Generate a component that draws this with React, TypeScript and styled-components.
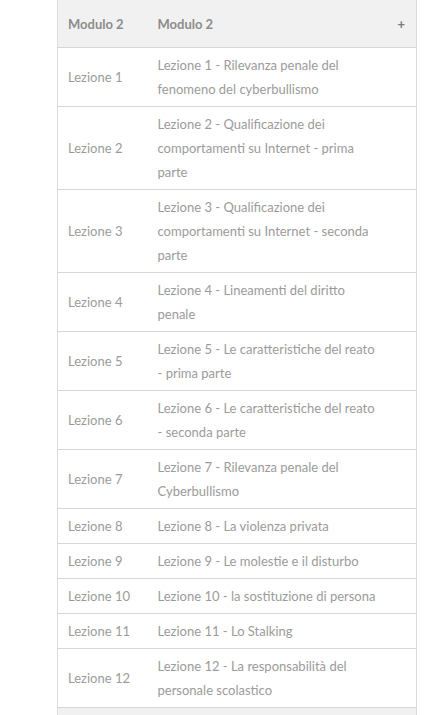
import React from "react";
import styled, { createGlobalStyle } from "styled-components";

const GlobalStyle = createGlobalStyle`
  html, body {
    margin: 0;
    padding: 0;
    background: #fff;
  }
  body {
    font-family: Lato, "Open Sans", "Liberation Sans", sans-serif;
  }
`;

interface Lesson {
  label: string;
  lines: string[];
}

const lessons: Lesson[] = [
  { label: "Lezione 1", lines: ["Lezione 1 - Rilevanza penale del", "fenomeno del cyberbullismo"] },
  { label: "Lezione 2", lines: ["Lezione 2 - Qualificazione dei", "comportamenti su Internet - prima", "parte"] },
  { label: "Lezione 3", lines: ["Lezione 3 - Qualificazione dei", "comportamenti su Internet - seconda", "parte"] },
  { label: "Lezione 4", lines: ["Lezione 4 - Lineamenti del diritto", "penale"] },
  { label: "Lezione 5", lines: ["Lezione 5 - Le caratteristiche del reato", "- prima parte"] },
  { label: "Lezione 6", lines: ["Lezione 6 - Le caratteristiche del reato", "- seconda parte"] },
  { label: "Lezione 7", lines: ["Lezione 7 - Rilevanza penale del", "Cyberbullismo"] },
  { label: "Lezione 8", lines: ["Lezione 8 - La violenza privata"] },
  { label: "Lezione 9", lines: ["Lezione 9 - Le molestie e il disturbo"] },
  { label: "Lezione 10", lines: ["Lezione 10 - la sostituzione di persona"] },
  { label: "Lezione 11", lines: ["Lezione 11 - Lo Stalking"] },
  { label: "Lezione 12", lines: ["Lezione 12 - La responsabilità del", "personale scolastico"] },
];

const App = () => {
  return (
    <>
      <GlobalStyle />
      <Wrapper>
        <Table>
          <colgroup>
            <col style={{ width: 90 }} />
            <col />
            <col style={{ width: 42 }} />
          </colgroup>
          <thead>
            <tr>
              <HeadCell>Modulo 2</HeadCell>
              <HeadCell>Modulo 2</HeadCell>
              <HeadCell $align="right">
                <Plus>+</Plus>
              </HeadCell>
            </tr>
          </thead>
          <tbody>
            {lessons.map((lesson) => (
              <tr key={lesson.label}>
                <Cell>{lesson.label}</Cell>
                <Cell colSpan={2}>
                  {lesson.lines.map((line, i) => (
                    <React.Fragment key={i}>
                      {i > 0 && <br />}
                      {line}
                    </React.Fragment>
                  ))}
                </Cell>
              </tr>
            ))}
            <tr>
              <FootCell colSpan={3} />
            </tr>
          </tbody>
        </Table>
      </Wrapper>
    </>
  );
};

const Wrapper = styled.main`
  margin-left: 57px;
  width: 360px;
`;

const Table = styled.table`
  width: 100%;
  border-collapse: collapse;
  table-layout: fixed;
  border-left: 1px solid #dcdcdc;
  border-right: 1px solid #dcdcdc;
`;

const HeadCell = styled.th<{ $align?: string }>`
  height: 47px;
  padding: 0 10px;
  background: #f1f1f1;
  color: #8c8c8c;
  font-size: 13px;
  font-weight: 700;
  text-align: ${(p) => p.$align || "left"};
  border-bottom: 1px solid #d3d8d3;
  vertical-align: middle;
`;

const Plus = styled.span`
  display: inline-block;
  font-size: 13px;
  font-weight: 700;
  color: #7a7a7a;
  margin-right: 1px;
`;

const Cell = styled.td`
  padding: 5px 10px;
  font-size: 13px;
  line-height: 24px;
  color: #9b9b9b;
  border-bottom: 1px solid #d3d8d3;
  vertical-align: middle;
  white-space: nowrap;
`;

const FootCell = styled.td`
  height: 12px;
  padding: 0;
  background: #f1f1f1;
`;

export default App;
